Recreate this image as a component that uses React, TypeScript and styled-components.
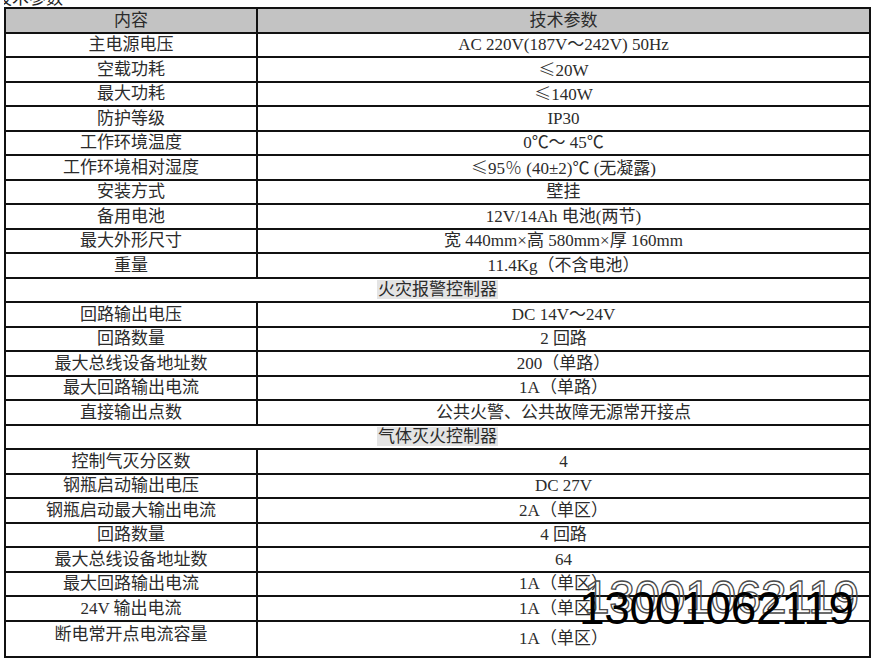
import React from 'react'
import styled, { createGlobalStyle } from 'styled-components'

const GlobalStyle = createGlobalStyle`
  html, body {
    margin: 0;
    padding: 0;
    background: #ffffff;
  }
  body {
    font-family: "Liberation Serif", "Noto Sans CJK SC", serif;
    color: #2b2b2b;
  }
`

const Page = styled.div`
  position: relative;
  width: 880px;
  height: 659px;
  overflow: hidden;
  padding: 0 0 0 4px;
  box-sizing: border-box;
`

const Title = styled.div`
  height: 7px;
  overflow: hidden;
  display: flex;
  align-items: flex-end;
  font-size: 17px;
  line-height: 17px;
  text-indent: -9px;
  color: #222;
`

const Table = styled.table`
  border-collapse: collapse;
  width: 867px;
  table-layout: fixed;
  border: 2px solid #111;
`

const Row = styled.tr<{ $tall?: boolean }>`
  height: ${(p) => (p.$tall ? '36px' : '24.5px')};
`

const Cell = styled.td<{ $head?: boolean; $top?: boolean }>`
  border: 2px solid #111;
  padding: ${(p) => (p.$top ? '3px 0 0' : '0')};
  text-align: center;
  vertical-align: ${(p) => (p.$top ? 'top' : 'middle')};
  font-size: 17px;
  line-height: 19px;
  white-space: nowrap;
  background: ${(p) => (p.$head ? '#c3c3c3' : '#ffffff')};
`

const Section = styled.span`
  background: #e4e4e4;
  padding: 0 1px;
`

const Sym = styled.span`
  font-family: "Noto Sans CJK SC", sans-serif;
  font-weight: 300;
`

const Mark = styled.div<{ $ghost?: boolean }>`
  position: absolute;
  left: ${(p) => (p.$ghost ? '584px' : '579px')};
  top: ${(p) => (p.$ghost ? '574px' : '585px')};
  font-family: "Liberation Sans", Arial, sans-serif;
  font-size: 46px;
  line-height: 46px;
  letter-spacing: -0.3px;
  color: ${(p) => (p.$ghost ? 'transparent' : '#000')};
  -webkit-text-stroke: ${(p) => (p.$ghost ? '1.3px #4a4a4a' : '0')};
  pointer-events: none;
`

type Item = [React.ReactNode, React.ReactNode] | { section: string }

const items: Item[] = [
  ['主电源电压', 'AC 220V(187V～242V) 50Hz'],
  ['空载功耗', <><Sym>≤</Sym>20W</>],
  ['最大功耗', <><Sym>≤</Sym>140W</>],
  ['防护等级', 'IP30'],
  ['工作环境温度', '0℃～ 45℃'],
  ['工作环境相对湿度', <><Sym>≤</Sym>95<Sym>％</Sym> (40±2)℃ (无凝露)</>],
  ['安装方式', '壁挂'],
  ['备用电池', '12V/14Ah 电池(两节)'],
  ['最大外形尺寸', '宽 440mm×高 580mm×厚 160mm'],
  ['重量', '11.4Kg（不含电池）'],
  { section: '火灾报警控制器' },
  ['回路输出电压', 'DC 14V～24V'],
  ['回路数量', '2 回路'],
  ['最大总线设备地址数', '200（单路）'],
  ['最大回路输出电流', '1A（单路）'],
  ['直接输出点数', '公共火警、公共故障无源常开接点'],
  { section: '气体灭火控制器' },
  ['控制气灭分区数', '4'],
  ['钢瓶启动输出电压', 'DC 27V'],
  ['钢瓶启动最大输出电流', '2A（单区）'],
  ['回路数量', '4 回路'],
  ['最大总线设备地址数', '64'],
  ['最大回路输出电流', '1A（单区）'],
  ['24V 输出电流', '1A（单区）'],
]

const App: React.FC = () => {
  return (
    <Page>
      <GlobalStyle />
      <Title>技术参数</Title>
      <Table>
        <colgroup>
          <col style={{ width: 252 }} />
          <col />
        </colgroup>
        <tbody>
          <Row>
            <Cell $head>内容</Cell>
            <Cell $head>技术参数</Cell>
          </Row>
          {items.map((it, i) =>
            'section' in it ? (
              <Row key={i}>
                <Cell colSpan={2}>
                  <Section>{it.section}</Section>
                </Cell>
              </Row>
            ) : (
              <Row key={i}>
                <Cell>{it[0]}</Cell>
                <Cell>{it[1]}</Cell>
              </Row>
            )
          )}
          <Row $tall>
            <Cell $top>断电常开点电流容量</Cell>
            <Cell>1A（单区）</Cell>
          </Row>
        </tbody>
      </Table>
      <Mark $ghost>13001062119</Mark>
      <Mark>13001062119</Mark>
    </Page>
  )
}

export default App
